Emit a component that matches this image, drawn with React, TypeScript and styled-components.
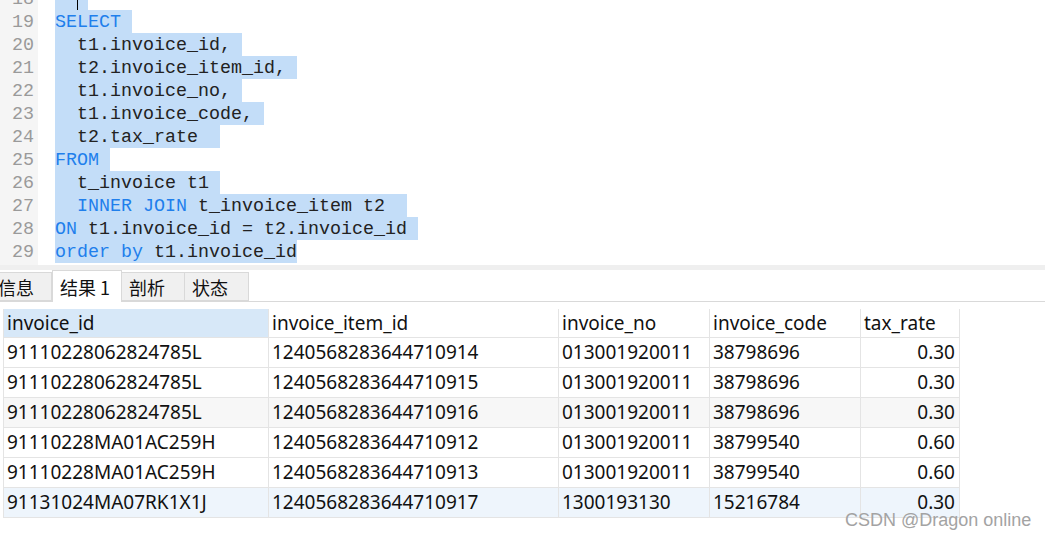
import React from 'react';
import styled, { createGlobalStyle } from 'styled-components';

const GlobalStyle = createGlobalStyle`
  html, body {
    margin: 0;
    padding: 0;
    background: #ffffff;
    overflow: hidden;
  }
`;

const Page = styled.div`
  position: relative;
  width: 1045px;
  height: 541px;
  overflow: hidden;
  background: #ffffff;
`;

const Editor = styled.div`
  height: 265px;
  overflow: hidden;
  background: linear-gradient(to right, #f5f5f5 38px, #ffffff 38px);
  font-family: 'Liberation Mono', 'DejaVu Sans Mono', monospace;
  font-size: 18.33px;
  line-height: 25px;
`;

const Lines = styled.div`
  margin-top: -13px;
`;

const Line = styled.div`
  display: flex;
  height: 23px;
`;

const Gutter = styled.div`
  width: 38px;
  flex: none;
  box-sizing: border-box;
  padding-right: 4px;
  text-align: right;
  color: #9a9a9a;
  background: #f5f5f5;
`;

const Code = styled.div`
  padding-left: 17px;
  white-space: pre;
  color: #222;
`;

const Selected = styled.span`
  position: relative;
  display: inline-block;
  vertical-align: top;
  height: 23px;
  background: #c3ddf8;
`;

const Keyword = styled.span`
  color: #1f7fec;
`;

const Caret = styled.span`
  position: absolute;
  top: 0;
  left: 22px;
  width: 1px;
  height: 23px;
  background: #000;
`;

const Splitter = styled.div`
  height: 5px;
  background: #efefef;
`;

const TabBar = styled.div`
  display: flex;
  align-items: flex-end;
  height: 31px;
  border-bottom: 1px solid #d9d9d9;
  font-family: 'Noto Sans CJK SC', 'Noto Sans', sans-serif;
  font-size: 18px;
  color: #111;
`;

const Tab = styled.div<{ active?: boolean; width: number }>`
  box-sizing: border-box;
  width: ${({ width }) => width}px;
  height: ${({ active }) => (active ? 32 : 29)}px;
  margin-bottom: ${({ active }) => (active ? -1 : 0)}px;
  padding-left: 7px;
  border: 1px solid #d9d9d9;
  border-bottom: ${({ active }) => (active ? 'none' : '1px solid #d9d9d9')};
  border-left: ${({ active }) => (active ? '1px solid #d9d9d9' : 'none')};
  background: ${({ active }) => (active ? '#ffffff' : '#f0f0f0')};
  display: flex;
  align-items: center;
  white-space: nowrap;
  line-height: 1;

  &:first-child {
    margin-left: -11px;
    padding-left: 9px;
  }
`;

const GridArea = styled.div`
  padding: 7px 0 0 3px;
`;

const Table = styled.table`
  border-collapse: collapse;
  table-layout: fixed;
  font-family: 'Noto Sans', 'Liberation Sans', sans-serif;
  font-size: 19px;
  color: #111;
`;

const HeadCell = styled.th<{ selected?: boolean }>`
  height: 28px;
  padding: 0 3px;
  box-sizing: border-box;
  font-weight: normal;
  text-align: left;
  line-height: 28px;
  white-space: nowrap;
  border: 1px solid #e4e4e4;
  border-top: none;
  background: ${({ selected }) => (selected ? '#d7e8f8' : '#ffffff')};
`;

const Row = styled.tr<{ tone: 'plain' | 'alt' | 'focus' }>`
  background: ${({ tone }) => (tone === 'alt' ? '#f7f7f7' : tone === 'focus' ? '#eef5fc' : '#ffffff')};
`;

const Cell = styled.td<{ numeric?: boolean }>`
  height: 30px;
  padding: 0 ${({ numeric }) => (numeric ? 4 : 3)}px 0 3px;
  box-sizing: border-box;
  line-height: 29px;
  white-space: nowrap;
  overflow: hidden;
  text-align: ${({ numeric }) => (numeric ? 'right' : 'left')};
  border: 1px solid #e4e4e4;
`;

const Watermark = styled.div`
  position: absolute;
  left: 845px;
  top: 510px;
  font-family: 'Liberation Sans', Arial, sans-serif;
  font-size: 18px;
  color: #a3a3a3;
  white-space: nowrap;
`;

type Part = { text: string; kw?: boolean };

const code: { n: number; parts: Part[]; caret?: boolean }[] = [
  { n: 18, parts: [{ text: '   ' }], caret: true },
  { n: 19, parts: [{ text: 'SELECT', kw: true }, { text: ' ' }] },
  { n: 20, parts: [{ text: '  t1.invoice_id, ' }] },
  { n: 21, parts: [{ text: '  t2.invoice_item_id, ' }] },
  { n: 22, parts: [{ text: '  t1.invoice_no, ' }] },
  { n: 23, parts: [{ text: '  t1.invoice_code, ' }] },
  { n: 24, parts: [{ text: '  t2.tax_rate  ' }] },
  { n: 25, parts: [{ text: 'FROM', kw: true }, { text: ' ' }] },
  { n: 26, parts: [{ text: '  t_invoice t1 ' }] },
  { n: 27, parts: [{ text: '  ' }, { text: 'INNER JOIN', kw: true }, { text: ' t_invoice_item t2  ' }] },
  { n: 28, parts: [{ text: 'ON', kw: true }, { text: ' t1.invoice_id = t2.invoice_id ' }] },
  { n: 29, parts: [{ text: 'order by', kw: true }, { text: ' t1.invoice_id' }] },
];

const columns = [
  { name: 'invoice_id', width: 265 },
  { name: 'invoice_item_id', width: 290 },
  { name: 'invoice_no', width: 151 },
  { name: 'invoice_code', width: 151 },
  { name: 'tax_rate', width: 99 },
];

const rows: string[][] = [
  ['91110228062824785L', '1240568283644710914', '013001920011', '38798696', '0.30'],
  ['91110228062824785L', '1240568283644710915', '013001920011', '38798696', '0.30'],
  ['91110228062824785L', '1240568283644710916', '013001920011', '38798696', '0.30'],
  ['91110228MA01AC259H', '1240568283644710912', '013001920011', '38799540', '0.60'],
  ['91110228MA01AC259H', '1240568283644710913', '013001920011', '38799540', '0.60'],
  ['91131024MA07RK1X1J', '1240568283644710917', '1300193130', '15216784', '0.30'],
];

const tabs = [
  { label: '信息', width: 63 },
  { label: '结果 1', width: 70, active: true },
  { label: '剖析', width: 63 },
  { label: '状态', width: 64 },
];

const rowTone = (i: number): 'plain' | 'alt' | 'focus' => {
  if (i === rows.length - 1) {
    return 'focus';
  }
  return i === 2 ? 'alt' : 'plain';
};

export default function App() {
  return (
    <Page>
      <GlobalStyle />
      <Editor>
        <Lines>
          {code.map(line => (
            <Line key={line.n}>
              <Gutter>{line.n}</Gutter>
              <Code>
                <Selected>
                  {line.parts.map((p, i) => (p.kw ? <Keyword key={i}>{p.text}</Keyword> : <span key={i}>{p.text}</span>))}
                  {line.caret && <Caret />}
                </Selected>
              </Code>
            </Line>
          ))}
        </Lines>
      </Editor>
      <Splitter />
      <TabBar>
        {tabs.map(tab => (
          <Tab key={tab.label} active={tab.active} width={tab.width}>
            {tab.label}
          </Tab>
        ))}
      </TabBar>
      <GridArea>
        <Table>
          <colgroup>
            {columns.map(col => (
              <col key={col.name} style={{ width: col.width }} />
            ))}
          </colgroup>
          <thead>
            <tr>
              {columns.map((col, i) => (
                <HeadCell key={col.name} selected={i === 0}>
                  {col.name}
                </HeadCell>
              ))}
            </tr>
          </thead>
          <tbody>
            {rows.map((row, i) => (
              <Row key={row[1]} tone={rowTone(i)}>
                {row.map((value, j) => (
                  <Cell key={j} numeric={j === 4}>
                    {value}
                  </Cell>
                ))}
              </Row>
            ))}
          </tbody>
        </Table>
      </GridArea>
      <Watermark>CSDN @Dragon online</Watermark>
    </Page>
  );
}
